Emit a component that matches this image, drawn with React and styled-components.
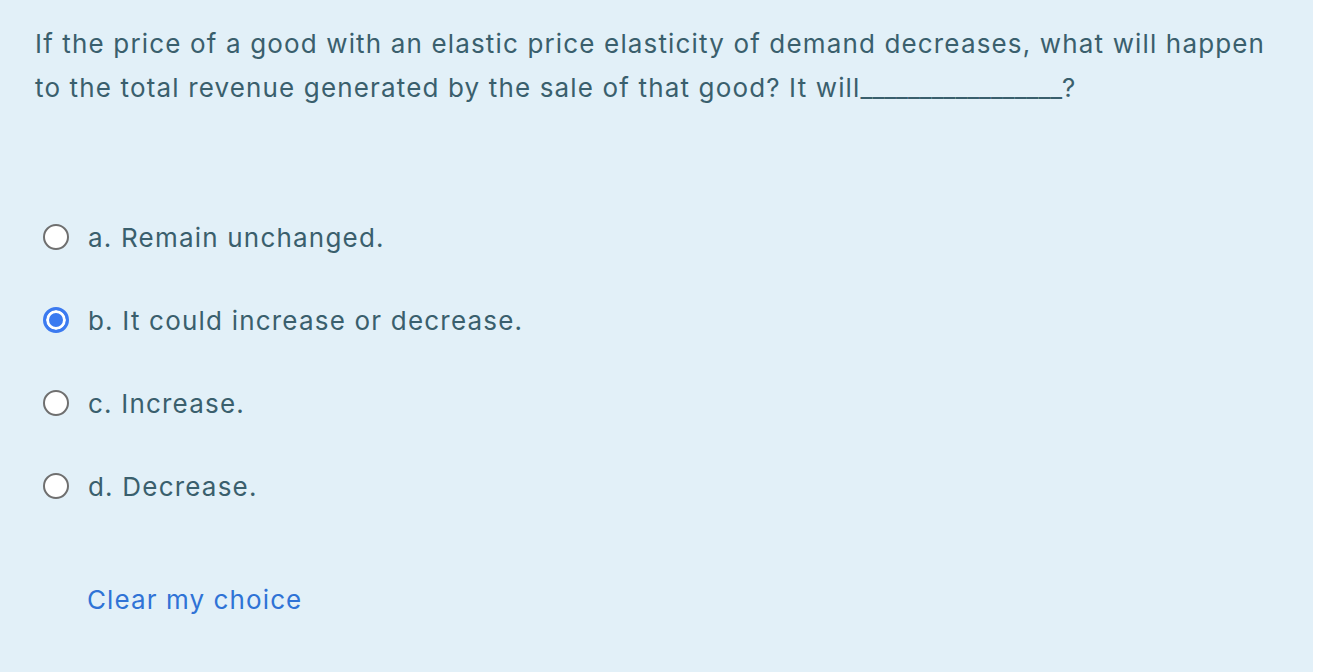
import React, { useState } from "react";
import styled, { createGlobalStyle } from "styled-components";

const Global = createGlobalStyle`
  html, body { margin: 0; padding: 0; background: #ffffff; }
  body { font-family: Inter, "Noto Sans", "Liberation Sans", sans-serif; }
`;

const Panel = styled.div`
  width: 1313px;
  height: 672px;
  box-sizing: border-box;
  background: #e2f0f8;
  padding: 22px 0 0 35px;
  color: #3a5f6d;
`;

const QText = styled.p`
  margin: 0;
  max-width: 1250px;
  font-size: 26px;
  line-height: 44px;
  letter-spacing: 1.15px;
`;

const Blank = styled.span`
  letter-spacing: 0;
`;

const Options = styled.div`
  margin-top: 105px;
  display: flex;
  flex-direction: column;
  gap: 39px;
`;

const Option = styled.label`
  display: flex;
  align-items: center;
  gap: 19px;
  height: 44px;
  padding-left: 8px;
  font-size: 26px;
  letter-spacing: 1.2px;
  cursor: pointer;
`;

const Radio = styled.span`
  width: 26px;
  height: 26px;
  box-sizing: border-box;
  border-radius: 50%;
  flex: none;
  border: ${(p) => (p.$checked ? "3px solid #3b7af0" : "2px solid #6f6f6f")};
  background: ${(p) => (p.$checked ? "#3b7af0" : "#ffffff")};
  box-shadow: ${(p) => (p.$checked ? "inset 0 0 0 3px #ffffff" : "none")};
`;

const ClearLink = styled.a`
  display: inline-block;
  margin: 70px 0 0 52px;
  font-size: 26px;
  line-height: 44px;
  letter-spacing: 1.1px;
  color: #2f73d6;
  text-decoration: none;
`;

const options = [
  "a. Remain unchanged.",
  "b. It could increase or decrease.",
  "c. Increase.",
  "d. Decrease.",
];

export default function App() {
  const [sel, setSel] = useState(1);
  return (
    <>
      <Global />
      <Panel>
        <QText>
          If the price of a good with an elastic price elasticity of demand decreases, what will happen to the total
          revenue generated by the sale of that good? It will<Blank>_________________</Blank>?
        </QText>
        <Options>
          {options.map((o, i) => (
            <Option key={o} onClick={() => setSel(i)}>
              <Radio $checked={sel === i} />
              {o}
            </Option>
          ))}
        </Options>
        <ClearLink href="#" onClick={(e) => { e.preventDefault(); setSel(null); }}>
          Clear my choice
        </ClearLink>
      </Panel>
    </>
  );
}
